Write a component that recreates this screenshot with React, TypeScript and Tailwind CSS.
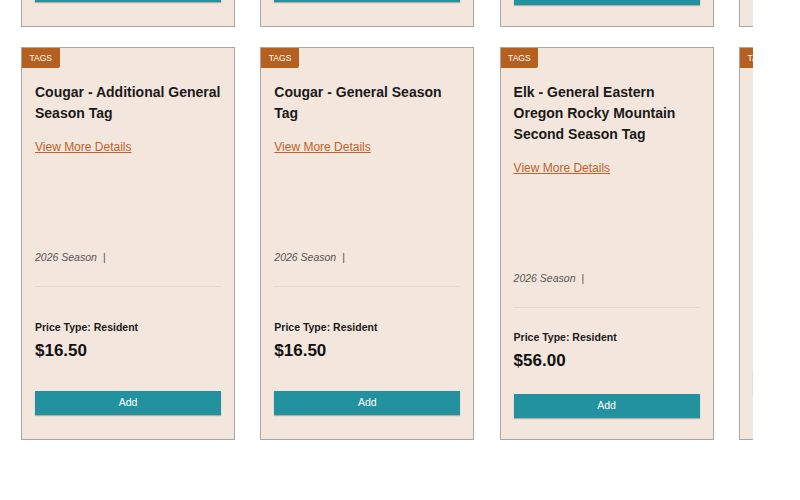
import React from 'react';

interface Tag {
  title: string;
  season: string;
  priceType: string;
  price: string;
}

const tags: Tag[] = [
  { title: 'Cougar - Additional General Season Tag', season: '2026 Season', priceType: 'Resident', price: '$16.50' },
  { title: 'Cougar - General Season Tag', season: '2026 Season', priceType: 'Resident', price: '$16.50' },
  { title: 'Elk - General Eastern Oregon Rocky Mountain Second Season Tag', season: '2026 Season', priceType: 'Resident', price: '$56.00' },
  { title: 'Deer - General Season Tag', season: '2026 Season', priceType: 'Resident', price: '$33.50' },
];

const TagCard: React.FC<{ tag: Tag; long?: boolean }> = ({ tag, long }) => {
  return (
    <div className="flex flex-col w-[214px] h-[393px] shrink-0 bg-[#f3e6dd] border border-[#aaa5a1]">
      <span className="self-start h-[20px] px-[7.5px] flex items-center bg-[#b5601f] text-white text-[8.5px] uppercase rounded-br-[2px]">
        Tags
      </span>
      <div className="flex flex-col flex-1 px-[13px]">
        <h3 className="mt-[14px] text-[14px] leading-[21px] font-bold text-[#1a1a1a]">{tag.title}</h3>
        <a href="#" className="mt-[13.5px] text-[12px] leading-[18px] text-[#c0622a] underline w-fit">
          View More Details
        </a>
        <div className="h-[94.5px]" />
        <p className="text-[10.5px] leading-[15px] italic text-[#555]">
          {tag.season}
          <span className="ml-[6px] not-italic">|</span>
        </p>
        <div className="mt-[21px] h-px bg-[#e6d8ce]" />
        <div className={long ? 'mt-[22px]' : 'mt-[32.5px]'}>
          <p className="text-[10.5px] leading-[15px] font-bold text-[#1a1a1a]">Price Type: {tag.priceType}</p>
          <p className={`${long ? 'mt-[3.5px]' : 'mt-[4px]'} text-[17px] leading-[24px] font-bold text-[#111]`}>
            {tag.price}
          </p>
        </div>
        <button
          className={`${long ? 'mt-[21px]' : 'mt-[28px]'} h-[24px] w-full bg-[#23929f] text-white text-[10.5px] shadow-[0_1px_1px_rgba(0,0,0,0.25)]`}
        >
          Add
        </button>
      </div>
    </div>
  );
};

export default function App() {
  return (
    <div className="w-[800px] h-[500px] bg-white overflow-hidden font-['Liberation_Sans',Arial,sans-serif]">
      <div className="w-[753px] overflow-hidden pl-[21px] -mt-[366px] flex flex-col gap-[20px]">
        {[0, 1].map(row => (
          <div key={row} className="flex gap-[25.3px]">
            {tags.map((tag, i) => (
              <TagCard key={i} tag={tag} long={i === 2} />
            ))}
          </div>
        ))}
      </div>
    </div>
  );
}
